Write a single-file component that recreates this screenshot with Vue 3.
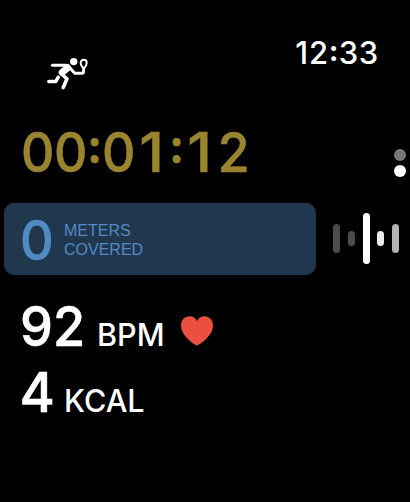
<template>
  <main class="watch">
    <header class="header">
      <svg class="sport" viewBox="0 0 42 34" aria-hidden="true">
        <circle cx="27.7" cy="4.6" r="3.7" fill="#fff" />
        <g fill="none" stroke="#fff" stroke-linecap="round" stroke-linejoin="round">
          <path d="M6.4 8.3H20" stroke-width="3" />
          <path d="M21.6 10.8L16.2 15.4" stroke-width="7" />
          <path d="M23.5 10.5L28.8 16.2H36.4" stroke-width="3" />
          <path d="M15.6 17L21 21.8L17.2 30.6" stroke-width="3.6" />
          <path d="M12.3 20.2L9.8 24.4H2.8" stroke-width="3.5" />
          <path d="M37.4 15.8L37.7 12" stroke-width="2.8" />
          <path d="M37.7 11.9C35.4 9.5 34.7 7.8 34.7 6C34.7 4 35.9 2.8 37.7 2.8C39.5 2.8 40.7 4 40.7 6C40.7 7.8 40 9.5 37.7 11.9Z" stroke-width="2" />
        </g>
      </svg>
      <time class="clock">12<span class="clock__colon">:</span>33</time>
    </header>

    <div class="elapsed">
      <span
        v-for="(char, i) in elapsed"
        :key="i"
        class="elapsed__char"
        :class="{ 'is-colon': char === ':', 'is-one': char === '1' }"
      >{{ char }}</span>
    </div>

    <nav class="pages">
      <i class="pages__dot" />
      <i class="pages__dot is-active" />
    </nav>

    <section class="distance-row">
      <div class="distance">
        <span class="value distance__value">0</span>
        <span class="distance__label">METERS<br />COVERED</span>
      </div>
      <div class="wave">
        <i
          v-for="(bar, i) in bars"
          :key="i"
          class="wave__bar"
          :style="{ height: bar.height + 'px', background: bar.color }"
        />
      </div>
    </section>

    <section class="metric">
      <span class="value">92</span>
      <span class="unit unit--bpm">BPM</span>
      <svg class="heart" viewBox="0 0 32 30" aria-hidden="true">
        <path d="M16 29.6C13 28.1 0 19.9 0 9.4C0 4.1 3.7 .3 8.5 .3C12 .3 14.6 2.1 16 5.1C17.4 2.1 20 .3 23.5 .3C28.3 .3 32 4.1 32 9.4C32 19.9 19 28.1 16 29.6Z" />
      </svg>
    </section>

    <section class="metric">
      <span class="value value--single">4</span>
      <span class="unit unit--kcal">KCAL</span>
    </section>
  </main>
</template>

<script setup>
const elapsed = '00:01:12'.split('')

// Equaliser bars, left to right
const bars = [
  { height: 29, color: '#4c4c4c' },
  { height: 15, color: '#4c4c4c' },
  { height: 51, color: '#fff' },
  { height: 15, color: '#ebebeb' },
  { height: 29, color: '#b3b3b3' },
]
</script>

<style>
body {
  background: #000;
}
</style>

<style scoped>
.watch {
  position: relative;
  box-sizing: border-box;
  width: 410px;
  height: 502px;
  overflow: hidden;
  background: #000;
  color: #fff;
  font-family: Inter, sans-serif;
  font-weight: 500;
}
.header {
  display: flex;
  justify-content: space-between;
  box-sizing: border-box;
  height: 119px;
  padding: 33px 31px 0 46px;
}
.sport {
  width: 42px;
  height: 34px;
  margin-top: 24px;
}
.clock {
  font-size: 31px;
  line-height: 40px;
  letter-spacing: 0.7px;
}
.clock__colon {
  display: inline-block;
  width: 10px;
  font-size: 29px;
  font-weight: 700;
  line-height: 36px;
  text-align: center;
  transform: translateY(-3px);
}
.elapsed {
  display: flex;
  height: 84px;
  padding-left: 20.5px;
  color: #9a8430;
  font-size: 55px;
  line-height: 66px;
  -webkit-text-stroke: 0.6px currentColor;
}
.elapsed__char {
  display: flex;
  justify-content: center;
  width: 33.4px;
  transform: scaleX(0.94);
}
.elapsed__char.is-one {
  transform: translateX(-1px) scaleX(1.08);
}
.elapsed__char.is-colon {
  width: 15px;
  font-size: 46px;
  font-weight: 700;
  transform: translateY(-6px) scaleX(0.95);
}
.pages {
  position: absolute;
  top: 149px;
  right: 4px;
  display: flex;
  flex-direction: column;
  gap: 4px;
}
.pages__dot {
  width: 12px;
  height: 12px;
  border-radius: 50%;
  background: #777;
}
.pages__dot.is-active {
  background: #fff;
}
.distance-row {
  display: flex;
  align-items: center;
  gap: 17px;
  margin-bottom: 18px;
  padding-left: 4px;
}
.distance {
  display: flex;
  align-items: center;
  box-sizing: border-box;
  width: 312px;
  height: 72px;
  padding: 2px 0 0 16px;
  border-radius: 10px;
  background: #21374d;
  color: #528ac6;
}
.value {
  width: 62px;
  margin-right: 4px;
  font-size: 55px;
  line-height: 66px;
  transform: scaleX(0.95);
  transform-origin: 0 50%;
  -webkit-text-stroke: 0.6px currentColor;
}
.distance__value {
  width: 40px;
}
.distance__label {
  font: 16px/19px "Liberation Sans", sans-serif;
}
.wave {
  display: flex;
  align-items: center;
  gap: 7.8px;
  height: 51px;
  margin-bottom: 1px;
}
.wave__bar {
  width: 7px;
  border-radius: 3.5px;
}
.metric {
  display: flex;
  align-items: baseline;
  height: 66px;
  padding-left: 20px;
}
.value--single {
  width: 29px;
  transform: translateX(-0.5px) scaleX(0.98);
}
.unit {
  font-size: 31px;
  line-height: 40px;
  transform: scaleX(0.985);
  transform-origin: 0 50%;
}
.unit--bpm {
  width: 84px;
  margin-left: 11px;
}
.unit--kcal {
  margin-left: 11px;
}
.heart {
  width: 32px;
  height: 30px;
  margin-bottom: -2px;
  fill: #eb4f3d;
}
</style>
